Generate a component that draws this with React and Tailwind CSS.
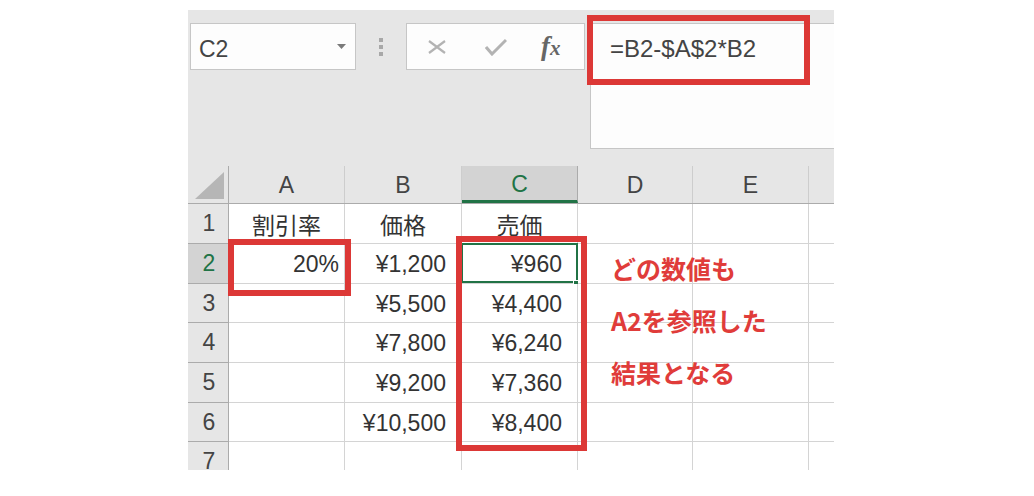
const COLS = [
  { key: 'A', w: 'w-[116px]' },
  { key: 'B', w: 'w-[117px]' },
  { key: 'C', w: 'w-[116px]' },
  { key: 'D', w: 'w-[115px]' },
  { key: 'E', w: 'w-[116px]' },
]

const ROWS = [
  { n: 1, h: 'h-[40px]', cells: ['割引率', '価格', '売価', '', ''], center: true },
  { n: 2, h: 'h-[40px]', cells: ['20%', '¥1,200', '¥960', '', ''] },
  { n: 3, h: 'h-[39px]', cells: ['', '¥5,500', '¥4,400', '', ''] },
  { n: 4, h: 'h-[40px]', cells: ['', '¥7,800', '¥6,240', '', ''] },
  { n: 5, h: 'h-[40px]', cells: ['', '¥9,200', '¥7,360', '', ''] },
  { n: 6, h: 'h-[39px]', cells: ['', '¥10,500', '¥8,400', '', ''] },
  { n: 7, h: 'h-[40px]', cells: ['', '', '', '', ''] },
]

const FONT = "font-['Liberation_Sans','Noto_Sans_CJK_JP',sans-serif]"
const JP = "font-['Noto_Sans_CJK_JP',sans-serif]"

function Toolbar() {
  return (
    <div className="h-[156px] shrink-0 flex items-start pt-[13px] pl-[2px]">
      <div className="w-[166px] h-[47px] bg-[#fdfdfd] border border-[#c6c6c6] flex items-center justify-between pl-[8px] pr-[9px]">
        <span className={`${FONT} text-[23px] text-[#444] leading-none pt-[6px]`}>C2</span>
        <svg width="9" height="5" viewBox="0 0 9 5">
          <path d="M0 0h9L4.5 5z" fill="#7a7a7a" />
        </svg>
      </div>
      <div className="w-[50px] h-[47px] flex flex-col items-center justify-center gap-[3px]">
        <span className="w-[4px] h-[4px] bg-[#a8a8a8]" />
        <span className="w-[4px] h-[4px] bg-[#a8a8a8]" />
        <span className="w-[4px] h-[4px] bg-[#a8a8a8]" />
      </div>
      <div className="w-[179px] h-[47px] bg-[#fdfdfd] border border-[#c6c6c6] flex items-center">
        <svg className="ml-[20px]" width="20" height="14" viewBox="0 0 20 14">
          <path d="M2 1l16 12M18 1L2 13" stroke="#b3b3b3" strokeWidth="2.2" />
        </svg>
        <svg className="ml-[38px]" width="22" height="18" viewBox="0 0 22 18">
          <path d="M1 9l6 7L21 2" stroke="#b3b3b3" strokeWidth="3" fill="none" />
        </svg>
        <span className="ml-[34px] font-['Liberation_Serif',serif] italic font-bold text-[27px] text-[#666] leading-none">
          f<span className="text-[21px]">x</span>
        </span>
      </div>
      <div className="ml-[5px] flex-1 h-[126px] bg-[#fdfdfd] border-l border-y border-[#c6c6c6] pl-[19px] pt-[13px]">
        <span className={`${FONT} text-[24px] text-[#444] leading-none`}>=B2-$A$2*B2</span>
      </div>
    </div>
  )
}

function HeaderRow() {
  return (
    <div className="h-[38px] shrink-0 flex border-b border-[#ababab]">
      <div className="w-[41px] h-full border-r border-[#ababab] flex items-end justify-end pr-[4px] pb-[4px]">
        <svg width="29" height="27" viewBox="0 0 29 27">
          <path d="M29 0v27H0z" fill="#b6b6b6" />
        </svg>
      </div>
      {COLS.map((c) => {
        const sel = c.key === 'C'
        return (
          <div
            key={c.key}
            className={`${c.w} h-full flex items-center justify-center border-r ${
              sel ? 'bg-[#d3d3d3] border-[#ababab] border-b-[3px] border-b-[#217346] -mb-px' : 'border-[#cdcdcd]'
            }`}
          >
            <span className={`${FONT} text-[23px] leading-none pt-[2px] ${sel ? 'text-[#217346]' : 'text-[#444]'}`}>
              {c.key}
            </span>
          </div>
        )
      })}
      <div className="flex-1" />
    </div>
  )
}

function GridRow({ row }) {
  const sel = row.n === 2
  return (
    <div className={`${row.h} flex shrink-0`}>
      <div
        className={`w-[41px] h-full border-r border-b border-[#ababab] flex items-center justify-center pl-[2px] ${
          sel ? 'bg-[#d3d3d3]' : 'bg-[#e6e6e6]'
        }`}
      >
        <span className={`${FONT} text-[23px] leading-none ${sel ? 'text-[#217346]' : 'text-[#444]'}`}>
          {row.n}
        </span>
      </div>
      {COLS.map((c, i) => {
        const v = row.cells[i]
        const active = sel && c.key === 'C'
        const pad = v.endsWith('%') ? 'pr-[5px]' : 'pr-[15px]'
        return (
          <div
            key={c.key}
            className={`${c.w} h-full bg-white border-r border-b border-[#d4d4d4] flex items-center relative ${
              row.center ? 'justify-center' : `justify-end ${pad}`
            }`}
          >
            <span className={`${row.center ? JP : FONT} text-[23px] text-[#333] leading-none pt-[2px]`}>{v}</span>
            {active && (
              <>
                <div className="absolute -left-px -top-px w-[117px] h-[40px] border-2 border-[#217346]" />
                <div className="absolute right-[-3px] bottom-[-4px] w-[7px] h-[7px] bg-[#217346] border border-white" />
              </>
            )}
          </div>
        )
      })}
      <div className="flex-1 h-full bg-white border-b border-[#d4d4d4]" />
    </div>
  )
}

export default function App() {
  return (
    <div className="w-[1034px] h-[496px] bg-white relative overflow-hidden">
      <div className="ml-[188px] mt-[10px] w-[646px] h-[460px] bg-[#e6e6e6] overflow-hidden flex flex-col">
        <Toolbar />
        <HeaderRow />
        {ROWS.map((r) => (
          <GridRow key={r.n} row={r} />
        ))}
      </div>

      {/* red annotation boxes */}
      <div className="absolute left-[587px] top-[15px] w-[223px] h-[70px] border-[6px] border-[#dc3836]" />
      <div className="absolute left-[228px] top-[239px] w-[123px] h-[57px] border-[6px] border-[#dc3836]" />
      <div className="absolute left-[456px] top-[236px] w-[131px] h-[215px] border-[6px] border-[#dc3836]" />

      <div className={`absolute left-[611px] top-[242px] ${JP} font-bold text-[25px] leading-[52px] text-[#e03c3a] flex flex-col`}>
        <span className="h-[52px]">どの数値も</span>
        <span className="h-[52px]">A2を参照した</span>
        <span className="h-[52px]">結果となる</span>
      </div>
    </div>
  )
}
